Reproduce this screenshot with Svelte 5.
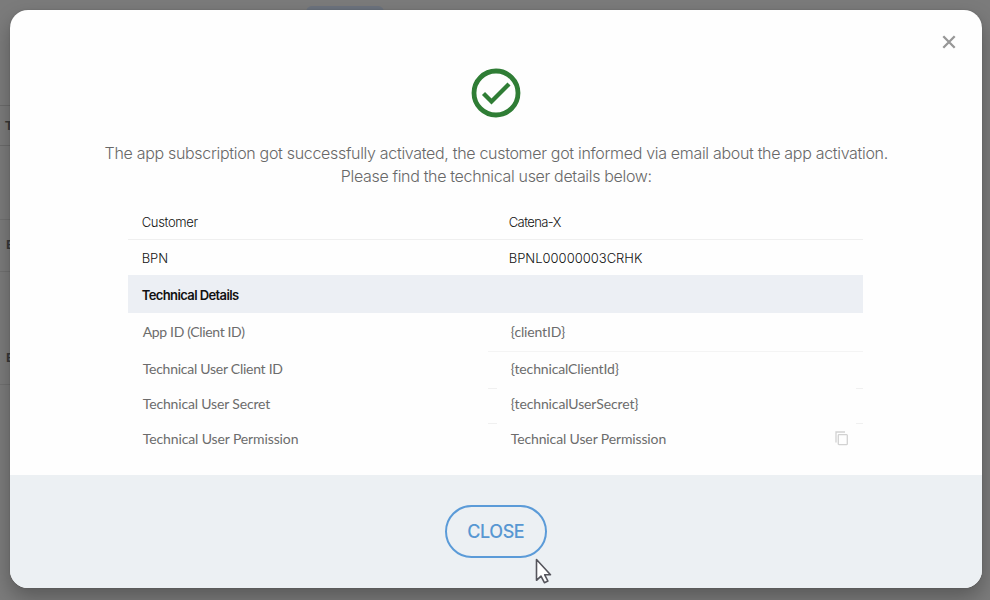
<script>
  const customer = [
    { label: 'Customer', value: 'Catena-X', labelGap: -0.35, valueGap: -0.6 },
    { label: 'BPN', value: 'BPNL00000003CRHK', labelGap: -0.1, valueGap: 0 }
  ];
  const details = [
    { label: 'App ID (Client ID)', value: '{clientID}', line: 'full', labelGap: -0.35, valueGap: -0.15 },
    { label: 'Technical User Client ID', value: '{technicalClientId}', line: 'ends', labelGap: -0.26, valueGap: -0.14 },
    { label: 'Technical User Secret', value: '{technicalUserSecret}', line: 'ends', labelGap: -0.16, valueGap: -0.12 },
    { label: 'Technical User Permission', value: 'Technical User Permission', copy: true, labelGap: -0.12, valueGap: -0.13 }
  ];
  let open = $state(true);
</script>

<main class="page">
  <div class="behind tab"></div>
  <div class="behind header-cell">T</div>
  <div class="behind row-cell first">E</div>
  <div class="behind row-cell second">E</div>

  {#if open}
    <div class="dialog" role="dialog" aria-modal="true">
      <button class="dismiss" aria-label="Close dialog" onclick={() => (open = false)}>
        <svg width="14" height="14" viewBox="0 0 14 14"><path d="M1.3 1.3 12.7 12.7M12.7 1.3 1.3 12.7" /></svg>
      </button>
      <div class="content">
        <svg class="success" width="50" height="50" viewBox="0 0 50 50">
          <circle cx="25" cy="25" r="22" />
          <path d="M12.500 25.500 20.500 33.500 38 16" />
        </svg>
        <p class="intro">
          <span class="line-one">The app subscription got successfully activated, the customer got informed via email about the app activation.</span>
          <span class="line-two">Please find the technical user details below:</span>
        </p>
        <div class="table">
          {#each customer as row}
            <div class="row customer">
              <span class="label" style:letter-spacing="{row.labelGap}px">{row.label}</span>
              <span class="value" style:letter-spacing="{row.valueGap}px">{row.value}</span>
            </div>
          {/each}
          <div class="band"><span>Technical Details</span></div>
          {#each details as row}
            <div class="row detail">
              <span class="label" style:letter-spacing="{row.labelGap}px">{row.label}</span>
              <div class="value {row.line ?? ''}">
                <span style:letter-spacing="{row.valueGap}px">{row.value}</span>
                {#if row.copy}
                  <svg class="copy" width="14" height="15" viewBox="0 0 14 15"><path d="M1 11.5V1h9M4 3.7h7.6a.7.7 0 0 1 .7.7v8.5a.7.7 0 0 1-.7.7H4a.7.7 0 0 1-.7-.7V4.400a.7.7 0 0 1 .7-.7z" /></svg>
                {/if}
              </div>
            </div>
          {/each}
        </div>
      </div>
      <footer>
        <button class="close" onclick={() => (open = false)}><span>CLOSE</span></button>
      </footer>
    </div>
  {/if}

  <svg class="cursor" width="18" height="27" viewBox="0 0 18 27">
    <path d="M1.500 1.500v20.800l4.500-4.200 3.400 6.600 3.500-1.700-3.200-6.200h5.800z" />
  </svg>
</main>

<style>
  :global(body) { margin: 0; }
  .page {
    position: relative;
    box-sizing: border-box;
    width: 990px;
    height: 600px;
    padding: 10px 8px 12px 10px;
    overflow: hidden;
    background: #7b7b7b;
    font-family: 'Liberation Sans', sans-serif;
  }
  .behind { position: absolute; left: 0; box-sizing: border-box; color: #383838; font-weight: 700; font-size: 13px; }
  .tab { left: 306px; top: 6px; width: 78px; height: 12px; border-radius: 6px; background: #6c737e; }
  .header-cell { top: 105px; width: 20px; height: 41px; padding-left: 5px; line-height: 40px; border: solid #6b6b6b; border-width: 1px 0; }
  .row-cell { width: 20px; padding-left: 6px; border-top: 1px solid #707070; }
  .first { top: 219px; height: 53px; line-height: 50px; }
  .second { top: 271px; height: 114px; line-height: 172px; border-bottom: 1px solid #707070; }
  .dialog {
    position: relative;
    display: flex;
    flex-direction: column;
    width: 971.500px;
    height: 578px;
    border-radius: 18px;
    overflow: hidden;
    background: #fefefe;
    box-shadow: 0 9px 20px rgba(0, 0, 0, .28), 0 0 2px rgba(0, 0, 0, .15);
  }
  button { font-family: inherit; padding: 0; cursor: default; }
  .dismiss { position: absolute; right: 25.500px; top: 25px; width: 14px; height: 14px; border: 0; background: none; display: flex; }
  .dismiss path { stroke: #979797; stroke-width: 2.300; fill: none; }
  .content { height: 465px; flex: none; display: flex; flex-direction: column; align-items: center; }
  .success { flex: none; margin-top: 58px; margin-left: 1px; fill: none; stroke: #2f7d35; }
  .success circle { stroke-width: 4.800; }
  .success path { stroke-width: 4.300; }
  .intro { margin: 24px 0 0 1px; display: flex; flex-direction: column; align-items: center; font: 300 16px/23px Inter, sans-serif; color: #686868; white-space: nowrap; }
  .line-one { letter-spacing: -.315px; }
  .line-two { letter-spacing: -.33px; }
  .table { width: 735px; margin-top: 16px; margin-left: -1px; }
  .row { display: flex; align-items: center; box-sizing: border-box; }
  .label { box-sizing: border-box; flex: none; }
  .customer { height: 36px; font: 300 13px/18px Inter, sans-serif; color: #111; }
  .customer:first-child { border-bottom: 1px solid #efefef; }
  .customer + .customer { height: 35px; }
  .customer .label { width: 381px; padding-left: 14px; }
  .band { height: 38px; display: flex; align-items: center; padding-left: 14px; background: #eceff4; font: 600 13px/18px Inter, sans-serif; color: #111; }
  .band span { letter-spacing: -.61px; position: relative; top: .500px; }
  .detail { height: 35.500px; font: 400 14px/18px Lato, sans-serif; color: #6c6c6c; }
  .detail .label, .detail .value > span { position: relative; top: -1px; }
  .band + .detail { height: 39px; }
  .detail:last-child { height: 34px; }
  .detail .label { width: 360px; padding-left: 15px; }
  .detail .value { position: relative; flex: 1; height: 100%; box-sizing: border-box; padding: 0 13.500px 0 23px; display: flex; align-items: center; justify-content: space-between; }
  .band + .detail .value > span { top: 0; }
  .full { border-bottom: 1px solid #f4f4f4; }
  .ends::before, .ends::after { content: ''; position: absolute; bottom: -1px; width: 9px; height: 1px; background: #f0f0f0; }
  .ends::before { left: 0; }
  .ends::after { right: 0; width: 7px; }
  .copy { position: relative; top: -1.500px; }
  .copy path { fill: none; stroke: #d2d2d2; stroke-width: 1.300; }
  footer { flex: 1; display: flex; justify-content: center; align-items: flex-start; padding-top: 30px; background: #ecf0f3; }
  .close { box-sizing: border-box; width: 102px; height: 53px; border: 2px solid #5b9bd8; border-radius: 27px; background: transparent; color: #5797d2; font: 500 18px/49px Inter, sans-serif; letter-spacing: -.4px; }
  .cursor { position: absolute; left: 535px; top: 557.500px; }
  .cursor path { fill: #fff; stroke: #55555c; stroke-width: 1.600; stroke-linejoin: round; }
</style>
